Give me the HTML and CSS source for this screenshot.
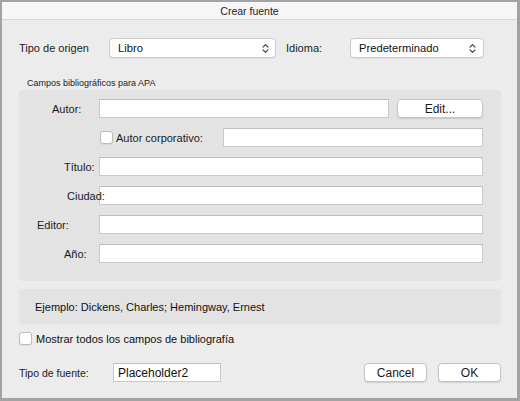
FILE: index.html
```html
<!DOCTYPE html>
<html lang="es">
<head>
<meta charset="utf-8">
<title>Crear fuente</title>
<link rel="stylesheet" href="styles.css">
</head>
<body>
<div class="window">
  <div class="titlebar"><span class="title">Crear fuente</span></div>
  <div class="content">
    <div class="top-row">
      <span class="lbl lbl-origen">Tipo de origen</span>
      <div class="select sel-origen">
        <span class="sel-text">Libro</span>
        <svg class="chev" width="7" height="11" viewBox="0 0 7 11"><path d="M1 4.2 L3.5 1.6 L6 4.2 M1 6.8 L3.5 9.4 L6 6.8" fill="none" stroke="#3a3a3a" stroke-width="1.1" stroke-linecap="round" stroke-linejoin="round"/></svg>
      </div>
      <span class="lbl lbl-idioma">Idioma:</span>
      <div class="select sel-idioma">
        <span class="sel-text">Predeterminado</span>
        <svg class="chev" width="7" height="11" viewBox="0 0 7 11"><path d="M1 4.2 L3.5 1.6 L6 4.2 M1 6.8 L3.5 9.4 L6 6.8" fill="none" stroke="#3a3a3a" stroke-width="1.1" stroke-linecap="round" stroke-linejoin="round"/></svg>
      </div>
    </div>

    <div class="group-title">Campos bibliográficos para APA</div>
    <div class="group">
      <div class="frow">
        <span class="flbl l-autor">Autor:</span>
        <div class="input w-autor"></div>
        <div class="btn btn-edit">Edit...</div>
      </div>
      <div class="frow">
        <span class="flbl"></span>
        <span class="checkbox cb-corp"></span>
        <span class="cblbl">Autor corporativo:</span>
        <div class="input w-corp"></div>
      </div>
      <div class="frow">
        <span class="flbl l-titulo">Título:</span>
        <div class="input w-full"></div>
      </div>
      <div class="frow">
        <span class="flbl l-ciudad">Ciudad:</span>
        <div class="input w-full"></div>
      </div>
      <div class="frow">
        <span class="flbl l-editor">Editor:</span>
        <div class="input w-full"></div>
      </div>
      <div class="frow">
        <span class="flbl l-ano">Año:</span>
        <div class="input w-full"></div>
      </div>
    </div>

    <div class="example">Ejemplo: Dickens, Charles; Hemingway, Ernest</div>

    <div class="showall">
      <span class="checkbox"></span>
      <span class="showall-text">Mostrar todos los campos de bibliografía</span>
    </div>

    <div class="bottom-row">
      <span class="lbl lbl-tipo">Tipo de fuente:</span>
      <div class="input ph">Placeholder2</div>
      <div class="spacer"></div>
      <div class="btn btn-cancel">Cancel</div>
      <div class="btn btn-ok">OK</div>
    </div>
  </div>
</div>
</body>
</html>
```

FILE: styles.css
```css
* { box-sizing: border-box; }

html, body {
  margin: 0;
  padding: 0;
}

body {
  width: 520px;
  height: 401px;
  background: #a3a3a3;
  padding: 2px 3px 3px 2px;
  font-family: "Liberation Sans", Arial, sans-serif;
  color: #1b1b1b;
  overflow: hidden;
}

.window {
  width: 515px;
  height: 396px;
  background: #ececec;
  display: flex;
  flex-direction: column;
}

.titlebar {
  height: 18px;
  background: #f6f6f6;
  border-bottom: 1px solid #d6d6d6;
  display: flex;
  align-items: center;
  justify-content: center;
  padding-right: 20px;
}

.title {
  font-size: 10.5px;
  color: #222;
  line-height: 12px;
}

.content {
  padding: 18px 16px 0 17px;
  display: flex;
  flex-direction: column;
}

/* top row */
.top-row {
  display: flex;
  align-items: center;
  height: 20px;
}

.lbl {
  font-size: 11px;
  white-space: nowrap;
}

.lbl-origen { width: 90px; }
.lbl-idioma { width: 64px; margin-left: 10px; }

.select {
  height: 20px;
  background: #fff;
  border: 1px solid #cbcbcb;
  border-radius: 4px;
  box-shadow: 0 1px 0 rgba(0,0,0,0.06);
  display: flex;
  align-items: center;
  justify-content: space-between;
  padding: 0 6px 0 8px;
}

.sel-text {
  font-size: 11.2px;
  color: #111;
}

.sel-origen { width: 167px; }
.sel-idioma { width: 134px; padding-right: 7px; }

.chev { display: block; }

/* group */
.group-title {
  font-size: 9px;
  line-height: 12px;
  height: 12px;
  margin-top: 19px;
  margin-bottom: 1px;
  padding-left: 8px;
  color: #1b1b1b;
}

.group {
  width: 482px;
  height: 191px;
  background: #e3e3e3;
  border-radius: 4px;
  padding-top: 9px;
  display: flex;
  flex-direction: column;
  gap: 10px;
}

.frow {
  display: flex;
  align-items: center;
  height: 19px;
}

.flbl {
  width: 80px;
  flex: none;
  font-size: 11px;
  white-space: nowrap;
  position: relative;
  z-index: 1;
}

.l-autor { padding-left: 33px; }
.l-titulo { padding-left: 45px; }
.l-ciudad { padding-left: 48px; }
.l-editor { padding-left: 18px; }
.l-ano { padding-left: 45px; }

.input {
  height: 19px;
  background: #fff;
  border: 1px solid #c9c9c9;
  border-top-color: #bdbdbd;
  flex: none;
}

.w-autor { width: 290px; }
.w-corp { width: 260px; }
.w-full { width: 384px; }

.btn {
  height: 19px;
  background: #fff;
  border: 1px solid #c4c4c4;
  border-radius: 4px;
  box-shadow: 0 1px 1px rgba(0,0,0,0.12);
  font-size: 12px;
  display: flex;
  align-items: center;
  justify-content: center;
  color: #1a1a1a;
  flex: none;
}

.btn-edit {
  width: 86px;
  margin-left: 8px;
}

.checkbox {
  width: 13px;
  height: 13px;
  background: #fff;
  border: 1px solid #bcbcbc;
  border-radius: 3px;
  flex: none;
  box-shadow: 0 1px 0 rgba(0,0,0,0.05);
}

.cb-corp { margin-left: 1px; }

.cblbl {
  width: 107px;
  margin-left: 3px;
  font-size: 11px;
  white-space: nowrap;
}

/* example */
.example {
  width: 482px;
  height: 35px;
  margin-top: 8px;
  background: #e3e3e3;
  border-radius: 4px;
  font-size: 11px;
  display: flex;
  align-items: center;
  padding-left: 16px;
  color: #111;
}

.showall {
  display: flex;
  align-items: center;
  height: 13px;
  margin-top: 8px;
}

.showall-text {
  font-size: 11px;
  margin-left: 4px;
  color: #111;
}

/* bottom */
.bottom-row {
  display: flex;
  align-items: center;
  height: 19px;
  margin-top: 18px;
  width: 482px;
}

.lbl-tipo {
  width: 94px;
  font-size: 10.5px;
}

.ph {
  width: 108px;
  font-size: 12px;
  display: flex;
  align-items: center;
  padding-left: 4px;
  color: #111;
}

.spacer { flex: 1; }

.btn-cancel { width: 63px; }
.btn-ok { width: 63px; margin-left: 11px; }
```
